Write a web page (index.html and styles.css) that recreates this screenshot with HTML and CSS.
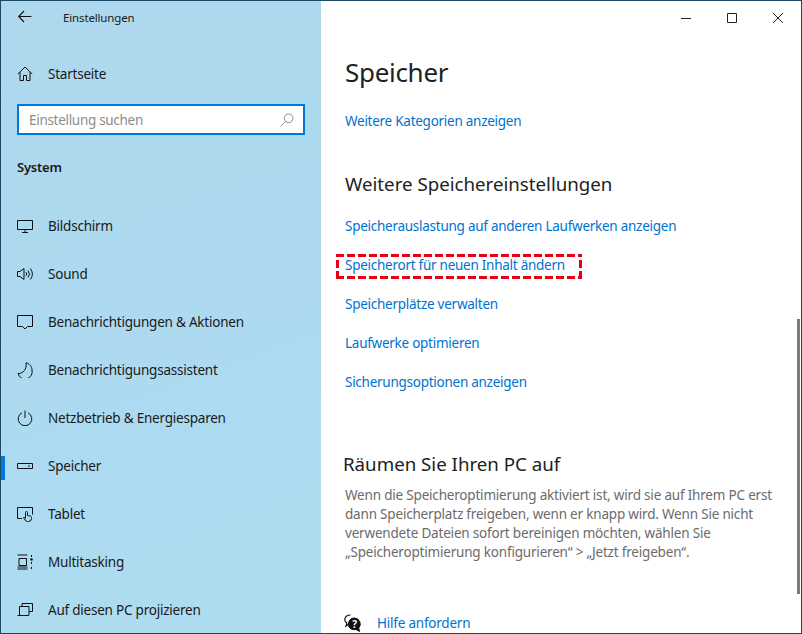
FILE: index.html
```html
<!DOCTYPE html>
<html lang="de">
<head>
    <meta charset="UTF-8">
    <meta name="viewport" content="width=device-width, initial-scale=1.0">
    <title>Einstellungen</title>
    <link rel="stylesheet" href="styles.css">
</head>
<body>
<div class="window">
    <aside class="sidebar">
        <div class="app-title">
            <svg class="back" width="16" height="16" viewBox="0 0 16 16"><path d="M14.500 7.500H2M7 2 1.700 7.500 7 13"/></svg>
            <span>Einstellungen</span>
        </div>
        <div class="nav-item home">
            <svg class="icon" viewBox="0 0 16 16"><path d="M.8 8 8 1l7.200 7M3 6.200v8.300h3.500V9.500h3v5H13V6.200"/></svg>
            <span>Startseite</span>
        </div>
        <div class="search">
            <span>Einstellung suchen</span>
            <svg class="search-icon" width="14" height="14" viewBox="0 0 14 14"><circle cx="8.700" cy="5.300" r="4.300"/><path d="M5.600 8.400.7 13.300"/></svg>
        </div>
        <div class="group-title">System</div>
        <nav class="nav">
            <div class="nav-item">
                <svg class="icon" viewBox="0 0 16 16"><path d="M.5 2.500h15v9H.5zM8 11.500v3M5 14.500h6"/></svg>
                <span>Bildschirm</span>
            </div>
            <div class="nav-item">
                <svg class="icon" viewBox="0 0 16 16"><path d="M.5 5.500h2.500L7 2.500v11l-4-3H.5zM9 6.200q1.400 1.800 0 3.600M11 4.500q2.800 3.500 0 7M13.300 2.500q4.200 5.500 0 11"/></svg>
                <span>Sound</span>
            </div>
            <div class="nav-item">
                <svg class="icon" viewBox="0 0 16 16"><path d="M.5 1.500h15v11h-5L8 15l-2.500-2.500h-5z"/></svg>
                <span>Benachrichtigungen &amp; Aktionen</span>
            </div>
            <div class="nav-item">
                <svg class="icon" viewBox="0 0 16 16"><path d="M9 .8c3.500.7 6 3.700 6 7.200a7 7 0 0 1-14 3.500c4.800.5 9.200-4.500 8-10.700z"/></svg>
                <span>Benachrichtigungsassistent</span>
            </div>
            <div class="nav-item">
                <svg class="icon" viewBox="0 0 16 16"><path d="M8 .5v7.500M5 2.800a6.800 6.800 0 1 0 6 0"/></svg>
                <span>Netzbetrieb &amp; Energiesparen</span>
            </div>
            <div class="nav-item active">
                <svg class="icon" viewBox="0 0 16 16"><path d="M.5 5.500h15v5H.5zM11 8h2"/></svg>
                <span>Speicher</span>
            </div>
            <div class="nav-item">
                <svg class="icon" viewBox="0 0 16 16"><path d="M5 12.500H.5v-11h15v7M10.500 15.500q-2 0-3.500-3l-.5-1 1-.2 1 1.200V6.500a1 1 0 0 1 2 0v3l3 .7q1 .3 1 1.300v1q0 3-3 3z"/></svg>
                <span>Tablet</span>
            </div>
            <div class="nav-item">
                <svg class="icon" viewBox="0 0 16 16"><path d="M.5 1h10M.5 15h10M2 4.500h7.500v7H2zM.5 13h10M14.500 1v2M14.500 8v2M14.500 13v2"/><circle class="dot" cx="14.500" cy="5.500" r="1.300"/></svg>
                <span>Multitasking</span>
            </div>
            <div class="nav-item">
                <svg class="icon" viewBox="0 0 16 16"><path d="M5 4V1.500h10.500v8H12M2.500 6V4.500h9.500v8.500M.5 13.500h11.500M2.500 6v7.500"/></svg>
                <span>Auf diesen PC projizieren</span>
            </div>
        </nav>
    </aside>

    <main class="content">
        <div class="window-controls">
            <svg width="46" height="32" viewBox="0 0 46 32"><path d="M18 17.500h10"/></svg>
            <svg width="46" height="32" viewBox="0 0 46 32"><path d="M18.500 12.500h9v9h-9z"/></svg>
            <svg width="46" height="32" viewBox="0 0 46 32"><path d="m18 12 10 10M28 12 18 22"/></svg>
        </div>
        <h1>Speicher</h1>
        <a class="link first">Weitere Kategorien anzeigen</a>
        <h2>Weitere Speichereinstellungen</h2>
        <a class="link">Speicherauslastung auf anderen Laufwerken anzeigen</a>
        <a class="link marked">Speicherort für neuen Inhalt ändern</a>
        <a class="link">Speicherplätze verwalten</a>
        <a class="link">Laufwerke optimieren</a>
        <a class="link">Sicherungsoptionen anzeigen</a>
        <h2 class="clean-title">Räumen Sie Ihren PC auf</h2>
        <p>Wenn die Speicheroptimierung aktiviert ist, wird sie auf Ihrem PC erst<br>dann Speicherplatz freigeben, wenn er knapp wird. Wenn Sie nicht<br>verwendete Dateien sofort bereinigen möchten, wählen Sie<br>„Speicheroptimierung konfigurieren“ &gt; „Jetzt freigeben“.</p>
        <div class="help">
            <svg width="18" height="18" viewBox="0 0 18 18">
                <path class="bubble-back" d="M6.500 1C3 1 .8 3 .8 5.500c0 1.500.8 2.800 2 3.600L2 12l3-2"/>
                <path class="bubble-front" d="M10.500 4a6 6 0 0 0-3 11.200c1.500.5 3 .5 4.500.2l3.500 2.100-.8-3.500A6 6 0 0 0 10.500 4z"/>
                <text x="10.500" y="13.500">?</text>
            </svg>
            <a class="link-plain">Hilfe anfordern</a>
        </div>
        <div class="scrollbar"></div>
    </main>
</div>
</body>
</html>
```

FILE: styles.css
```css
html, body {
    margin: 0;
    padding: 0;
}
body {
    font-family: "Noto Sans", "Open Sans", sans-serif;
    font-size: 13.5px;
    letter-spacing: -0.22px;
    color: #1a1a1a;
}
.window {
    position: relative;
    box-sizing: border-box;
    width: 802px;
    height: 634px;
    border: 1px solid #1b4a66;
    display: grid;
    grid-template-columns: 320px 1fr;
    overflow: hidden;
}

/* left pane */
.sidebar {
    background: linear-gradient(160deg, #aed8ed, #acdaf0 60%, #aedcf0);
    display: flex;
    flex-direction: column;
}
svg path, svg circle {
    fill: none;
    stroke: #111;
    stroke-width: 1;
}
.app-title {
    display: flex;
    align-items: center;
    height: 32px;
    padding-left: 16px;
    font-size: 11.5px;
    letter-spacing: -0.15px;
    gap: 30px;
}
.back path {
    stroke-width: 1.1;
}
.nav-item {
    position: relative;
    display: flex;
    align-items: center;
    height: 48px;
    padding-left: 16px;
    gap: 15px;
    white-space: nowrap;
}
.icon {
    width: 16px;
    height: 16px;
    flex: none;
}
.icon .dot {
    fill: #111;
    stroke: none;
}
.home {
    margin-top: 17px;
}
.search {
    box-sizing: border-box;
    display: flex;
    align-items: center;
    justify-content: space-between;
    width: 288px;
    height: 31px;
    margin: 6px 0 0 16px;
    padding: 0 9px 0 10px;
    background: #fff;
    border: 2px solid #0078d7;
    color: #8c8c8c;
    letter-spacing: -0.3px;
}
.search-icon path, .search-icon circle {
    stroke: #8a8a8a;
}
.group-title {
    margin: 22px 0 0 16px;
    height: 20px;
    line-height: 20px;
    font-weight: 600;
    font-size: 13px;
}
.nav {
    margin-top: 25px;
}
.active::before {
    content: "";
    position: absolute;
    left: 0;
    top: 14px;
    width: 4px;
    height: 24px;
    background: #0078d7;
}

/* right pane */
.content {
    position: relative;
    background: #fff;
    padding-left: 24px;
    display: flex;
    flex-direction: column;
    align-items: flex-start;
}
.window-controls {
    position: absolute;
    top: 0;
    right: 0;
    display: flex;
}
.window-controls path {
    stroke: #222;
}
h1 {
    margin: 51px 0 0;
    font-weight: 400;
    font-size: 26px;
    letter-spacing: -0.3px;
    line-height: 40px;
    color: #222;
}
h2 {
    margin: 39px 0 0;
    font-weight: 400;
    font-size: 18.7px;
    letter-spacing: 0;
    line-height: 28px;
    color: #222;
}
.link {
    color: #0072d0;
    line-height: 20px;
    margin-top: 19px;
    letter-spacing: -0.26px;
    white-space: nowrap;
}
h2 + .link {
    margin-top: 18px;
}
/* red marker round the link */
.marked {
    position: relative;
}
.marked::after {
    content: "";
    position: absolute;
    left: -9px;
    right: -17px;
    top: -1px;
    bottom: -4px;
    background:
        repeating-linear-gradient(90deg, #e60012 0 8px, transparent 8px 11px) top / 100% 3px no-repeat,
        repeating-linear-gradient(90deg, #e60012 0 8px, transparent 8px 11px) bottom / 100% 3px no-repeat,
        repeating-linear-gradient(0deg, #e60012 0 8px, transparent 8px 11px) left / 3px 100% no-repeat,
        repeating-linear-gradient(0deg, #e60012 0 8px, transparent 8px 11px) right / 3px 100% no-repeat;
}
h2.clean-title {
    margin: 58px 0 0 -2px;
}
p {
    margin: 8px 0 0;
    line-height: 19px;
    letter-spacing: -0.19px;
    color: #6b6b6b;
}
.help {
    position: absolute;
    left: 23px;
    top: 612px;
    display: flex;
    align-items: center;
    gap: 15px;
    line-height: 20px;
}
.link-plain {
    color: #0072d0;
}
.bubble-back {
    stroke: #111;
    stroke-width: 1.2;
}
svg .bubble-front {
    fill: #111;
    stroke: #111;
}
.help text {
    fill: #fff;
    font-size: 10px;
    font-weight: 700;
    text-anchor: middle;
}
.scrollbar {
    position: absolute;
    right: 1px;
    top: 318px;
    width: 3px;
    height: 275px;
    background: #7a7a7a;
}
```
